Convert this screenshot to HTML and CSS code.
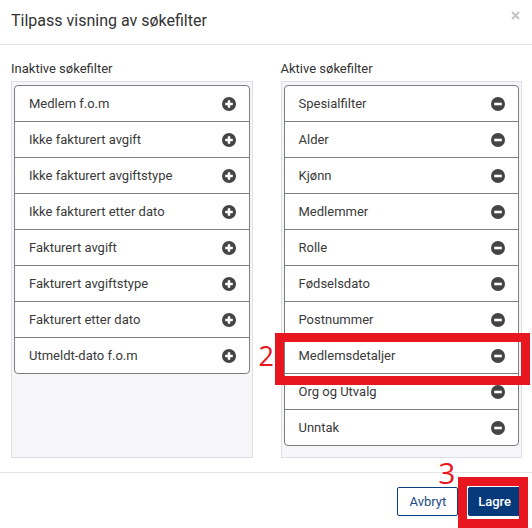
FILE: index.html
```html
<!DOCTYPE html>
<html lang="no">

<head>
    <meta charset="UTF-8">
    <meta name="viewport" content="width=device-width, initial-scale=1.0">
    <title>Tilpass visning av søkefilter</title>
    <link rel="stylesheet" href="styles.css">
</head>

<body>
    <div class="modal">
        <div class="modal-header">
            <h2 class="modal-title">Tilpass visning av søkefilter</h2>
            <span class="close">
                <svg width="9" height="9" viewBox="0 0 9 9">
                    <path d="M1 1 L8 8 M8 1 L1 8" stroke="#c4c4c4" stroke-width="2" />
                </svg>
            </span>
        </div>

        <div class="modal-body">
            <div class="column">
                <div class="column-label">Inaktive søkefilter</div>
                <div class="panel">
                    <ul class="filter-list" id="inactiveList"></ul>
                </div>
            </div>
            <div class="column">
                <div class="column-label">Aktive søkefilter</div>
                <div class="panel">
                    <ul class="filter-list" id="activeList"></ul>
                </div>
            </div>
        </div>

        <div class="modal-footer">
            <button class="btn btn-outline">Avbryt</button>
            <span class="marked">
                <button class="btn btn-primary">Lagre</button>
                <span class="mark-box mark-save"></span>
                <span class="mark-num num-save">3</span>
            </span>
        </div>
    </div>

    <script>
        const inactive = ['Medlem f.o.m', 'Ikke fakturert avgift', 'Ikke fakturert avgiftstype',
            'Ikke fakturert etter dato', 'Fakturert avgift', 'Fakturert avgiftstype',
            'Fakturert etter dato', 'Utmeldt-dato f.o.m'];
        const active = ['Spesialfilter', 'Alder', 'Kjønn', 'Medlemmer', 'Rolle', 'Fødselsdato',
            'Postnummer', 'Medlemsdetaljer', 'Org og Utvalg', 'Unntak'];

        const plusIcon = '<svg width="14" height="14" viewBox="0 0 14 14"><circle cx="7" cy="7" r="7" fill="#444"/><path d="M7 3.2 V10.8 M3.2 7 H10.8" stroke="#fff" stroke-width="2.4"/></svg>';
        const minusIcon = '<svg width="14" height="14" viewBox="0 0 14 14"><circle cx="7" cy="7" r="7" fill="#444"/><path d="M3.2 7 H10.8" stroke="#fff" stroke-width="2.6"/></svg>';

        function fillList(id, items, icon) {
            const list = document.getElementById(id);
            items.forEach(name => {
                const li = document.createElement('li');
                li.className = 'filter-item';
                li.innerHTML = '<span>' + name + '</span>' + icon;
                if (name === 'Medlemsdetaljer') {
                    li.innerHTML += '<span class="mark-box mark-item"></span><span class="mark-num num-item">2</span>';
                }
                list.appendChild(li);
            });
        }

        fillList('inactiveList', inactive, plusIcon);
        fillList('activeList', active, minusIcon);
    </script>
</body>

</html>
```

FILE: styles.css
```css
body {
    margin: 0;
    font-family: Roboto, "Liberation Sans", sans-serif;
    color: #333;
    background-color: #fff;
}

.modal {
    width: 532px;
    height: 528px;
    overflow: hidden;
    background-color: #fff;
}

.modal-header {
    height: 45px;
    box-sizing: border-box;
    border-bottom: 1px solid #e5e5e5;
    padding: 0 12px 0 11px;
    display: flex;
    align-items: center;
    justify-content: space-between;
}

.modal-title {
    margin: 0;
    font-size: 16px;
    font-weight: 400;
    color: #333;
    padding-bottom: 3px;
}

.close {
    display: flex;
    align-self: flex-start;
    margin-top: 11px;
}

.modal-body {
    display: grid;
    grid-template-columns: 1fr 1fr;
    gap: 28px;
    padding: 16px 10px 0 11px;
}

.column-label {
    font-size: 13px;
    line-height: 16px;
    margin-bottom: 4px;
    color: #333;
}

.panel {
    height: 377px;
    box-sizing: border-box;
    border: 1px solid #dedee9;
    background-color: #f6f6f8;
    padding: 3px 2px 0 2px;
}

.filter-list {
    list-style: none;
    margin: 0;
    padding: 0;
    border: 1px solid #7a7d82;
    border-radius: 4px;
    background-color: #fff;
}

.filter-item {
    position: relative;
    height: 35px;
    display: flex;
    align-items: center;
    justify-content: space-between;
    padding: 0 13px 0 14px;
    font-size: 13px;
    color: #3a3a3a;
    border-bottom: 1px solid #7a7d82;
}

.filter-item:last-child {
    border-bottom: none;
}

.filter-item svg {
    display: block;
}

.modal-footer {
    margin-top: 14px;
    border-top: 1px solid #e5e5e5;
    padding: 14px 11px 0 11px;
    display: flex;
    justify-content: flex-end;
    gap: 10px;
}

.btn {
    height: 29px;
    padding: 0 11px;
    font-family: Roboto, "Liberation Sans", sans-serif;
    font-size: 13px;
    border-radius: 2px;
    cursor: pointer;
}

.btn-outline {
    border: 1px solid #0b3e7e;
    background-color: #fff;
    color: #1c4b86;
}

.btn-primary {
    border: 1px solid #063a7a;
    background-color: #063a7a;
    color: #fff;
    font-weight: 500;
    padding: 0 9px;
}

.marked {
    position: relative;
    display: flex;
}

/* red annotation marks */
.mark-box {
    position: absolute;
    border: 9px solid #e8161f;
    pointer-events: none;
}

.mark-item {
    top: -5px;
    left: -10px;
    right: -12px;
    bottom: -12px;
}

.mark-save {
    top: -10px;
    left: -10px;
    right: -7px;
    bottom: -12px;
}

.mark-num {
    position: absolute;
    color: #e8161f;
    font-family: "Open Sans", sans-serif;
    font-weight: 400;
    line-height: 1;
}

.num-item {
    left: -26px;
    top: 4px;
    font-size: 27px;
}

.num-save {
    left: -30px;
    top: -29px;
    font-size: 30px;
}
```
